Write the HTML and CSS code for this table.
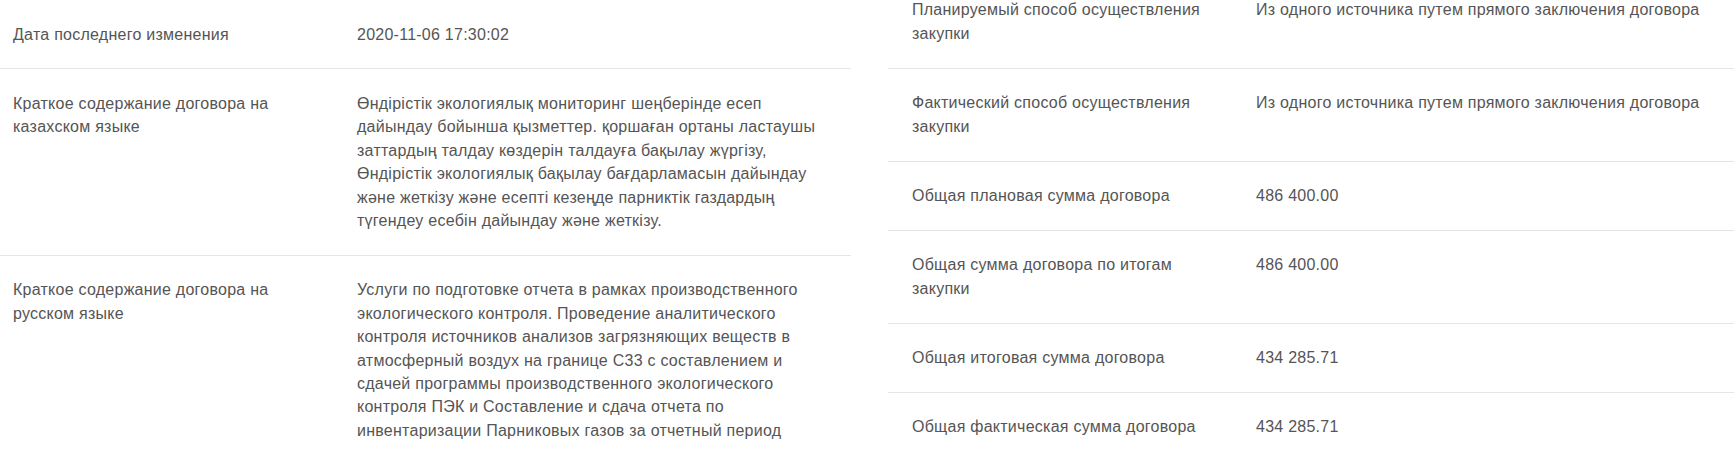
FILE: index.html
```html
<!DOCTYPE html>
<html lang="ru">
<head>
<meta charset="utf-8">
<title>Договор</title>
<link rel="stylesheet" href="styles.css">
</head>
<body>
<div class="page">
  <section class="col col-left">
    <div class="row">
      <div class="label">Дата последнего изменения</div>
      <div class="value">2020-11-06 17:30:02</div>
    </div>
    <div class="row">
      <div class="label">Краткое содержание договора на казахском языке</div>
      <div class="value">Өндірістік экологиялық мониторинг шеңберінде есеп<br>дайындау бойынша қызметтер. қоршаған ортаны ластаушы заттардың талдау көздерін талдауға бақылау жүргізу, Өндірістік экологиялық бақылау бағдарламасын дайындау және жеткізу және есепті кезеңде парниктік газдардың түгендеу есебін дайындау және жеткізу.</div>
    </div>
    <div class="row">
      <div class="label">Краткое содержание договора на русском языке</div>
      <div class="value">Услуги по подготовке отчета в рамках производственного экологического контроля. Проведение аналитического контроля источников анализов загрязняющих веществ в атмосферный воздух на границе С33 с составлением и сдачей программы производственного экологического контроля ПЭК и Составление и сдача отчета по<br>инвентаризации Парниковых газов за отчетный период</div>
    </div>
  </section>
  <section class="col col-right">
    <div class="row">
      <div class="label">Планируемый способ осуществления закупки</div>
      <div class="value">Из одного источника путем прямого заключения договора</div>
    </div>
    <div class="row">
      <div class="label">Фактический способ осуществления закупки</div>
      <div class="value">Из одного источника путем прямого заключения договора</div>
    </div>
    <div class="row">
      <div class="label">Общая плановая сумма договора</div>
      <div class="value">486 400.00</div>
    </div>
    <div class="row">
      <div class="label">Общая сумма договора по итогам закупки</div>
      <div class="value">486 400.00</div>
    </div>
    <div class="row">
      <div class="label">Общая итоговая сумма договора</div>
      <div class="value">434 285.71</div>
    </div>
    <div class="row">
      <div class="label">Общая фактическая сумма договора</div>
      <div class="value">434 285.71</div>
    </div>
  </section>
</div>
</body>
</html>
```

FILE: styles.css
```css
html, body {
  margin: 0;
  padding: 0;
  background: #fff;
  overflow: hidden;
}

body {
  font-family: "Liberation Sans", Arial, sans-serif;
  font-size: 16px;
  line-height: 24px;
  letter-spacing: 0.25px;
  color: #555;
}

.page {
  display: grid;
  grid-template-columns: 851px 846px;
  column-gap: 37px;
  align-items: start;
}

.col-right {
  margin-top: -24px;
}

.row {
  display: grid;
  grid-template-columns: 344px 1fr;
  padding: 22px 0;
  border-bottom: 1px solid #e5e5e5;
}

.col-left .row {
  padding: 22.5px 22px 22.5px 13px;
  line-height: 23.4px;
}

.col-right .row {
  padding-left: 24px;
  padding-right: 20px;
}

.label {
  padding-right: 34px;
}
```
